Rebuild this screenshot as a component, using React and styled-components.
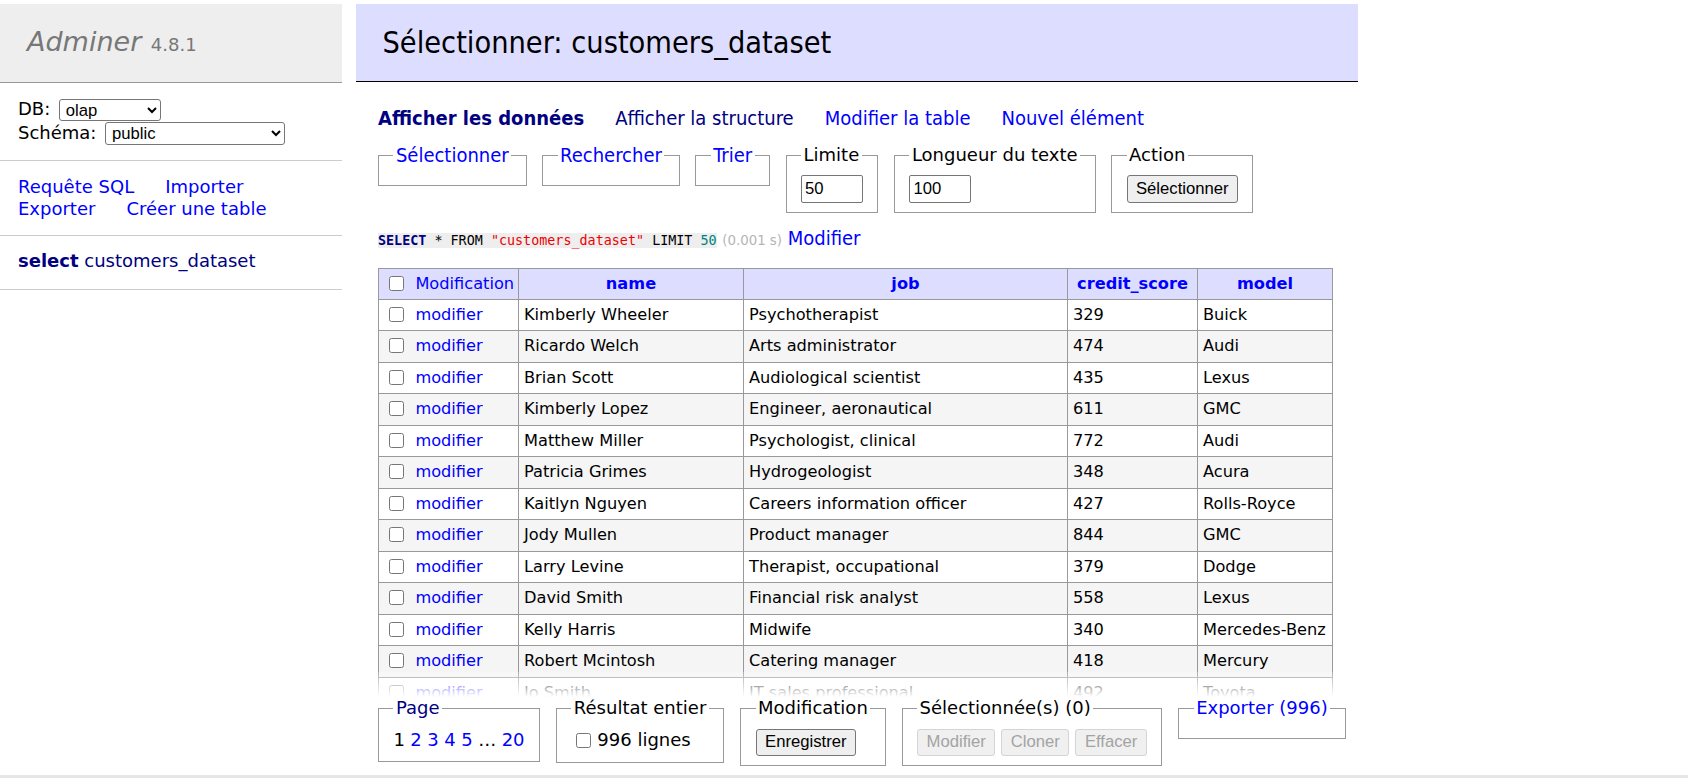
import React from 'react';
import styled, { createGlobalStyle } from 'styled-components';

const VERDANA = `"DejaVu Sans", Verdana, sans-serif`;
const TAHOMA = `"DejaVu Sans Condensed", "DejaVu Sans", Tahoma, sans-serif`;
const ARIAL = `"Liberation Sans", Arial, sans-serif`;
const MONO = `"DejaVu Sans Mono", "Liberation Mono", monospace`;

const GlobalStyle = createGlobalStyle`
  html, body { margin: 0; padding: 0; height: 100%; overflow: hidden; background: #fff; }
  body { font-family: ${VERDANA}; font-size: 18px; line-height: 22.5px; color: #000; }
  #root { height: 100%; }
  a { color: #00f; text-decoration: none; }
`;

const Screen = styled.div`
  height: 100%;
  display: flex;
  flex-direction: column;
`;

const Viewport = styled.div`
  flex: 1;
  min-height: 0;
  overflow: hidden;
`;

const BottomEdge = styled.div`
  flex: none;
  height: 3px;
  background: #e6e6e6;
`;

const Layout = styled.div`
  display: flex;
  align-items: flex-start;
  padding-top: 4px;
`;

/* ---------- menu ---------- */
const Menu = styled.nav`
  width: 342px;
  flex: none;
`;

const Logo = styled.h1`
  margin: 0;
  padding: 20.8px 27px;
  background: #eee;
  border-bottom: 1px solid #999;
  font-size: 27px;
  line-height: 33.75px;
  font-weight: normal;
  color: #777;
  white-space: nowrap;
`;

const LogoName = styled.a`
  color: #777;
  font-style: italic;
`;

const Version = styled.span`
  font-size: 18px;
  color: #777;
  margin-left: 1px;
`;

const MenuSection = styled.div`
  padding: 14.4px 18px ${(p) => (p.$extra ? 16.4 : 14.4)}px;
  border-bottom: 1px solid #ccc;
`;

const FieldRow = styled.label`
  display: flex;
  align-items: center;
  gap: 8.5px;
  height: 24px;
`;

const Select = styled.select`
  width: ${(p) => p.$w}px;
  height: ${(p) => p.$h}px;
  font-family: ${ARIAL};
  font-size: 16.67px;
  color: #000;
  background: #fff;
  border: 1px solid #767676;
  border-radius: 3px;
  padding: 0 2px;
`;

const LinkWrap = styled.div`
  display: flex;
  flex-wrap: wrap;
  column-gap: 31px;
`;

const MenuLink = styled.a`
  color: ${(p) => (p.$visited ? '#000080' : '#00f')};
  font-weight: ${(p) => (p.$bold ? 'bold' : 'normal')};
  white-space: nowrap;
`;

/* ---------- content ---------- */
const Content = styled.main`
  margin-left: 36px;
  padding: 0 25px 25px 0;
`;

const Title = styled.h2`
  margin: 0 0 25px -22.5px;
  padding: 21.6px 27px;
  background: #ddf;
  border-bottom: 1px solid #000;
  font-family: ${TAHOMA};
  font-stretch: condensed;
  font-size: 30.4px;
  line-height: 33.75px;
  font-weight: normal;
  color: #000;
`;

const Tabs = styled.div`
  display: flex;
  gap: 31px;
  font-family: ${TAHOMA};
  font-stretch: condensed;
  font-size: 20px;
  line-height: 22.5px;
`;

const Tab = styled.a`
  color: ${(p) => (p.$visited ? '#000080' : '#00f')};
  font-weight: ${(p) => (p.$active ? 'bold' : 'normal')};
`;

const FieldsetRow = styled.div`
  display: flex;
  align-items: flex-start;
  gap: 15.6px;
  margin-top: 14.4px;
`;

const Box = styled.fieldset`
  margin: 0;
  padding: 9px 14.4px;
  border: 1px solid #999;
  min-width: 0;
  display: flex;
  align-items: center;
  gap: 6px;
`;

const Legend = styled.legend`
  padding: 0 2.5px;
  font-size: 18px;
  line-height: 22.5px;
  white-space: nowrap;
`;

const LegendLink = styled.a`
  color: ${(p) => (p.$visited ? '#000080' : '#00f')};
  font-family: ${(p) => (p.$narrow ? TAHOMA : VERDANA)};
  font-stretch: ${(p) => (p.$narrow ? 'condensed' : 'normal')};
  font-size: ${(p) => (p.$narrow ? 20 : 18)}px;
`;

const TextInput = styled.input`
  box-sizing: border-box;
  width: 62px;
  height: 27.5px;
  margin: 0;
  padding: 1px 3px;
  font-family: ${ARIAL};
  font-size: 16.67px;
  border: 1px solid #767676;
  border-radius: 2px;
  color: #000;
`;

const Button = styled.button`
  box-sizing: border-box;
  height: 27.5px;
  margin: 0;
  padding: 0 8.5px;
  font-family: ${ARIAL};
  font-size: 16.67px;
  color: ${(p) => (p.disabled ? '#a3a3a3' : '#000')};
  background: ${(p) => (p.disabled ? '#f0f0f0' : '#efefef')};
  border: 1px solid ${(p) => (p.disabled ? '#d4d4d4' : '#767676')};
  border-radius: 3px;
`;

const SqlLine = styled.p`
  margin: 14.4px 0 0;
  line-height: 22.5px;
  white-space: nowrap;
`;

const Code = styled.code`
  font-family: ${MONO};
  font-size: 13.4px;
  background: #eee;
`;

const Kw = styled.span`
  color: ${(p) => (p.$strong ? '#000080' : '#000')};
  font-weight: ${(p) => (p.$strong ? 'bold' : 'normal')};
`;

const Str = styled.span`
  color: #e00;
`;

const Num = styled.span`
  color: #008080;
`;

const Time = styled.span`
  color: #b5b5b5;
  font-size: 13.3px;
`;

const NarrowLink = styled.a`
  font-family: ${TAHOMA};
  font-stretch: condensed;
  font-size: 20px;
`;

/* ---------- table ---------- */
const Grid = styled.table`
  border-collapse: collapse;
  table-layout: fixed;
  width: 954px;
  margin: 15px 25px 0 0;
  font-size: 16.2px;
`;

const HeadCell = styled.th`
  border: 1px solid #999;
  background: #ddf;
  padding: 4px 8px;
  line-height: 22px;
  text-align: center;
  font-weight: bold;
  white-space: nowrap;
`;

const HeadFirst = styled.td`
  border: 1px solid #999;
  background: #ddf;
  padding: 4px 5px;
  line-height: 22px;
  white-space: nowrap;
`;

const Cell = styled.td`
  border: 1px solid #999;
  background: ${(p) => (p.$alt ? '#f5f5f5' : '#fff')};
  padding: 4px 5px;
  line-height: 22.5px;
  white-space: nowrap;
  overflow: hidden;
`;

const Check = styled.input.attrs({ type: 'checkbox' })`
  width: 15px;
  height: 15px;
  margin: 0 ${(p) => (p.$tight ? 6 : 11.4)}px 0 5px;
  vertical-align: -2px;
`;

/* ---------- footer ---------- */
const Footer = styled.div`
  position: sticky;
  bottom: 0;
  margin-right: -25px;
  border-top: 25px solid rgba(255, 255, 255, 0.7);
  border-image: linear-gradient(rgba(255, 255, 255, 0.2), #fff) 100% 0;
`;

const FooterInner = styled.div`
  background: #fff;
  padding: 0 0 9px;
  display: flex;
  align-items: flex-start;
  gap: 16px;
`;

const Pager = styled.span`
  display: flex;
  align-items: center;
  gap: 5.5px;
  height: 23px;
  white-space: nowrap;
`;

const PageLink = styled.a`
  color: ${(p) => (p.$current ? '#000' : '#00f')};
`;

const CheckLabel = styled.label`
  display: flex;
  align-items: center;
  height: 24px;
  white-space: nowrap;
`;

const rows = [
  ['Kimberly Wheeler', 'Psychotherapist', '329', 'Buick'],
  ['Ricardo Welch', 'Arts administrator', '474', 'Audi'],
  ['Brian Scott', 'Audiological scientist', '435', 'Lexus'],
  ['Kimberly Lopez', 'Engineer, aeronautical', '611', 'GMC'],
  ['Matthew Miller', 'Psychologist, clinical', '772', 'Audi'],
  ['Patricia Grimes', 'Hydrogeologist', '348', 'Acura'],
  ['Kaitlyn Nguyen', 'Careers information officer', '427', 'Rolls-Royce'],
  ['Jody Mullen', 'Product manager', '844', 'GMC'],
  ['Larry Levine', 'Therapist, occupational', '379', 'Dodge'],
  ['David Smith', 'Financial risk analyst', '558', 'Lexus'],
  ['Kelly Harris', 'Midwife', '340', 'Mercedes-Benz'],
  ['Robert Mcintosh', 'Catering manager', '418', 'Mercury'],
  ['Jo Smith', 'IT sales professional', '492', 'Toyota'],
  ['Amanda Ortiz', 'Surveyor, mining', '701', 'Ford'],
  ['Steven Reed', 'Art therapist', '533', 'Honda'],
  ['Laura Bennett', 'Chief of Staff', '612', 'Kia'],
];

const colWidths = [140, 225, 324, 130, 135];
const heads = ['name', 'job', 'credit_score', 'model'];

export default function App() {
  return (
    <>
      <GlobalStyle />
      <Screen>
        <Viewport>
          <Layout>
            <Menu>
              <Logo>
                <LogoName href="#">Adminer</LogoName> <Version>4.8.1</Version>
              </Logo>
              <MenuSection>
                <FieldRow>
                  DB:
                  <Select $w={102} $h={22} defaultValue="olap">
                    <option>olap</option>
                  </Select>
                </FieldRow>
                <FieldRow>
                  Schéma:
                  <Select $w={180} $h={23} defaultValue="public">
                    <option>public</option>
                  </Select>
                </FieldRow>
              </MenuSection>
              <MenuSection>
                <LinkWrap>
                  <MenuLink href="#">Requête SQL</MenuLink>
                  <MenuLink href="#">Importer</MenuLink>
                  <MenuLink href="#">Exporter</MenuLink>
                  <MenuLink href="#">Créer une table</MenuLink>
                </LinkWrap>
              </MenuSection>
              <MenuSection $extra>
                <MenuLink href="#" $visited $bold>select</MenuLink>{' '}
                <MenuLink href="#" $visited>customers_dataset</MenuLink>
              </MenuSection>
            </Menu>

            <Content>
              <Title>Sélectionner: customers_dataset</Title>
              <Tabs>
                <Tab href="#" $visited $active>Afficher les données</Tab>
                <Tab href="#" $visited>Afficher la structure</Tab>
                <Tab href="#">Modifier la table</Tab>
                <Tab href="#">Nouvel élément</Tab>
              </Tabs>

              <FieldsetRow>
                <Box>
                  <Legend><LegendLink href="#" $narrow>Sélectionner</LegendLink></Legend>
                </Box>
                <Box>
                  <Legend><LegendLink href="#" $narrow>Rechercher</LegendLink></Legend>
                </Box>
                <Box>
                  <Legend><LegendLink href="#" $narrow>Trier</LegendLink></Legend>
                </Box>
                <Box>
                  <Legend>Limite</Legend>
                  <TextInput defaultValue="50" />
                </Box>
                <Box>
                  <Legend>Longueur du texte</Legend>
                  <TextInput defaultValue="100" />
                </Box>
                <Box>
                  <Legend>Action</Legend>
                  <Button>Sélectionner</Button>
                </Box>
              </FieldsetRow>

              <SqlLine>
                <Code>
                  <Kw $strong>SELECT</Kw> * <Kw>FROM</Kw> <Str>"customers_dataset"</Str> <Kw>LIMIT</Kw> <Num>50</Num>
                </Code>{' '}
                <Time>(0.001 s)</Time> <NarrowLink href="#">Modifier</NarrowLink>
              </SqlLine>

              <Grid>
                <colgroup>
                  {colWidths.map((w, i) => (
                    <col key={i} style={{ width: w }} />
                  ))}
                </colgroup>
                <thead>
                  <tr>
                    <HeadFirst>
                      <Check />
                      <a href="#">Modification</a>
                    </HeadFirst>
                    {heads.map((h) => (
                      <HeadCell key={h}>
                        <a href="#">{h}</a>
                      </HeadCell>
                    ))}
                  </tr>
                </thead>
                <tbody>
                  {rows.map((r, i) => (
                    <tr key={i}>
                      <Cell $alt={i % 2 === 1}>
                        <Check />
                        <a href="#">modifier</a>
                      </Cell>
                      {r.map((v, j) => (
                        <Cell key={j} $alt={i % 2 === 1}>{v}</Cell>
                      ))}
                    </tr>
                  ))}
                </tbody>
              </Grid>

              <Footer>
                <FooterInner>
                  <Box>
                    <Legend><LegendLink href="#" $visited>Page</LegendLink></Legend>
                    <Pager>
                      <PageLink as="span" $current>1</PageLink>
                      <PageLink href="#">2</PageLink>
                      <PageLink href="#">3</PageLink>
                      <PageLink href="#">4</PageLink>
                      <PageLink href="#">5</PageLink>
                      <PageLink as="span" $current>…</PageLink>
                      <PageLink href="#">20</PageLink>
                    </Pager>
                  </Box>
                  <Box>
                    <Legend>Résultat entier</Legend>
                    <CheckLabel>
                      <Check $tight />996 lignes
                    </CheckLabel>
                  </Box>
                  <Box>
                    <Legend>Modification</Legend>
                    <Button>Enregistrer</Button>
                  </Box>
                  <Box>
                    <Legend>Sélectionnée(s) (0)</Legend>
                    <Button disabled>Modifier</Button>
                    <Button disabled>Cloner</Button>
                    <Button disabled>Effacer</Button>
                  </Box>
                  <Box>
                    <Legend><LegendLink href="#">Exporter (996)</LegendLink></Legend>
                  </Box>
                </FooterInner>
              </Footer>
            </Content>
          </Layout>
        </Viewport>
        <BottomEdge />
      </Screen>
    </>
  );
}
